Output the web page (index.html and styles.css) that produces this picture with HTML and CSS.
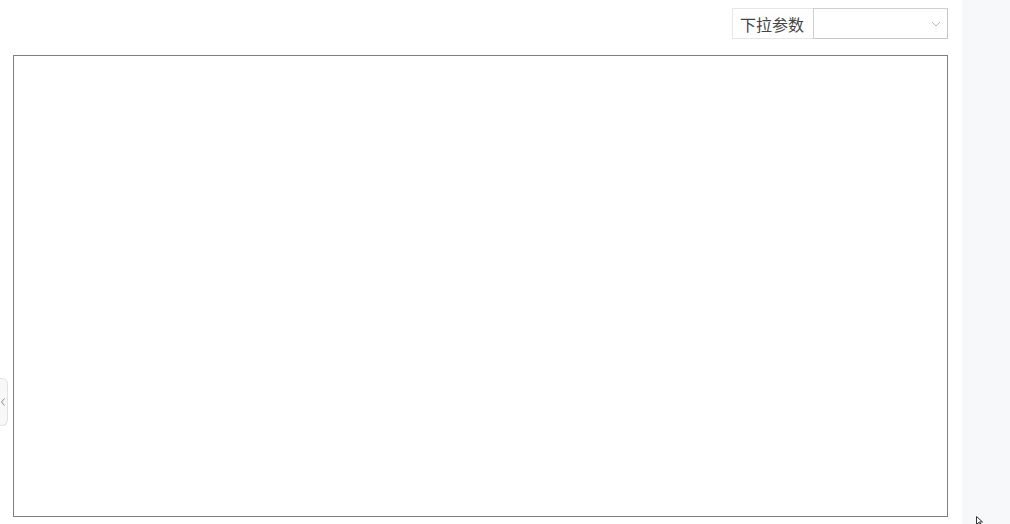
FILE: index.html
```html
<!DOCTYPE html>
<html lang="zh">
<head>
<meta charset="utf-8">
<title>下拉参数</title>
<link rel="stylesheet" href="styles.css">
</head>
<body>
<div class="page">
  <main class="main">
    <div class="toolbar">
      <div class="param">
        <span class="param-label">下拉参数</span>
        <div class="param-select">
          <svg class="chev" width="10" height="6" viewBox="0 0 10 6"><path d="M1 1l4 4 4-4" fill="none" stroke="#b8b8b8" stroke-width="1"/></svg>
        </div>
      </div>
    </div>
    <div class="chart"></div>
    <div class="collapse-tab">
      <svg width="6" height="10" viewBox="0 0 6 10"><path d="M4.5 1.5L1.5 5l3 3.5" fill="none" stroke="#888" stroke-width="1"/></svg>
    </div>
  </main>
  <aside class="side"></aside>
  <svg class="cursor" width="10" height="10" viewBox="0 0 10 10"><path d="M0.5 0.5v8l2-2 2 3 1-0.6-2-3h3z" fill="#fff" stroke="#333" stroke-width="1"/></svg>
</div>
</body>
</html>
```
FILE: styles.css
```css
html, body {
  margin: 0;
  padding: 0;
  background: #fff;
  font-family: "Noto Sans CJK SC", "Liberation Sans", sans-serif;
}
.page {
  position: relative;
  display: flex;
  width: 1010px;
  height: 524px;
  overflow: hidden;
}
.main {
  position: relative;
  width: 962px;
  box-sizing: border-box;
  padding: 8px 14px 0 13px;
  background: #fff;
}
.side {
  flex: 1;
  background: #f7f8fa;
}
.toolbar {
  display: flex;
  justify-content: flex-end;
  height: 31px;
}
.param {
  display: flex;
  height: 31px;
}
.param-label {
  box-sizing: border-box;
  width: 81px;
  height: 31px;
  border: 1px solid #e6e6e6;
  border-right: none;
  padding-left: 7px;
  padding-top: 1px;
  font-size: 16px;
  line-height: 29px;
  color: #444;
}
.param-select {
  box-sizing: border-box;
  width: 135px;
  height: 31px;
  border: 1px solid #cfcfcf;
  border-right-color: #c4c4c4;
  border-bottom-color: #c8c8c8;
  position: relative;
  display: flex;
  align-items: center;
  justify-content: flex-end;
  padding-right: 6px;
}
.chev {
  display: block;
}
.chart {
  margin-top: 16px;
  box-sizing: border-box;
  width: 935px;
  height: 462px;
  border: 1px solid #7f7f7f;
}
.collapse-tab {
  position: absolute;
  left: -1px;
  top: 378px;
  width: 9px;
  height: 48px;
  box-sizing: border-box;
  border: 1px solid #e2e2e2;
  border-left: none;
  border-radius: 0 6px 6px 0;
  background: #f8f8f8;
  display: flex;
  align-items: center;
  justify-content: center;
}
.cursor {
  position: absolute;
  left: 976px;
  top: 516px;
}
```
